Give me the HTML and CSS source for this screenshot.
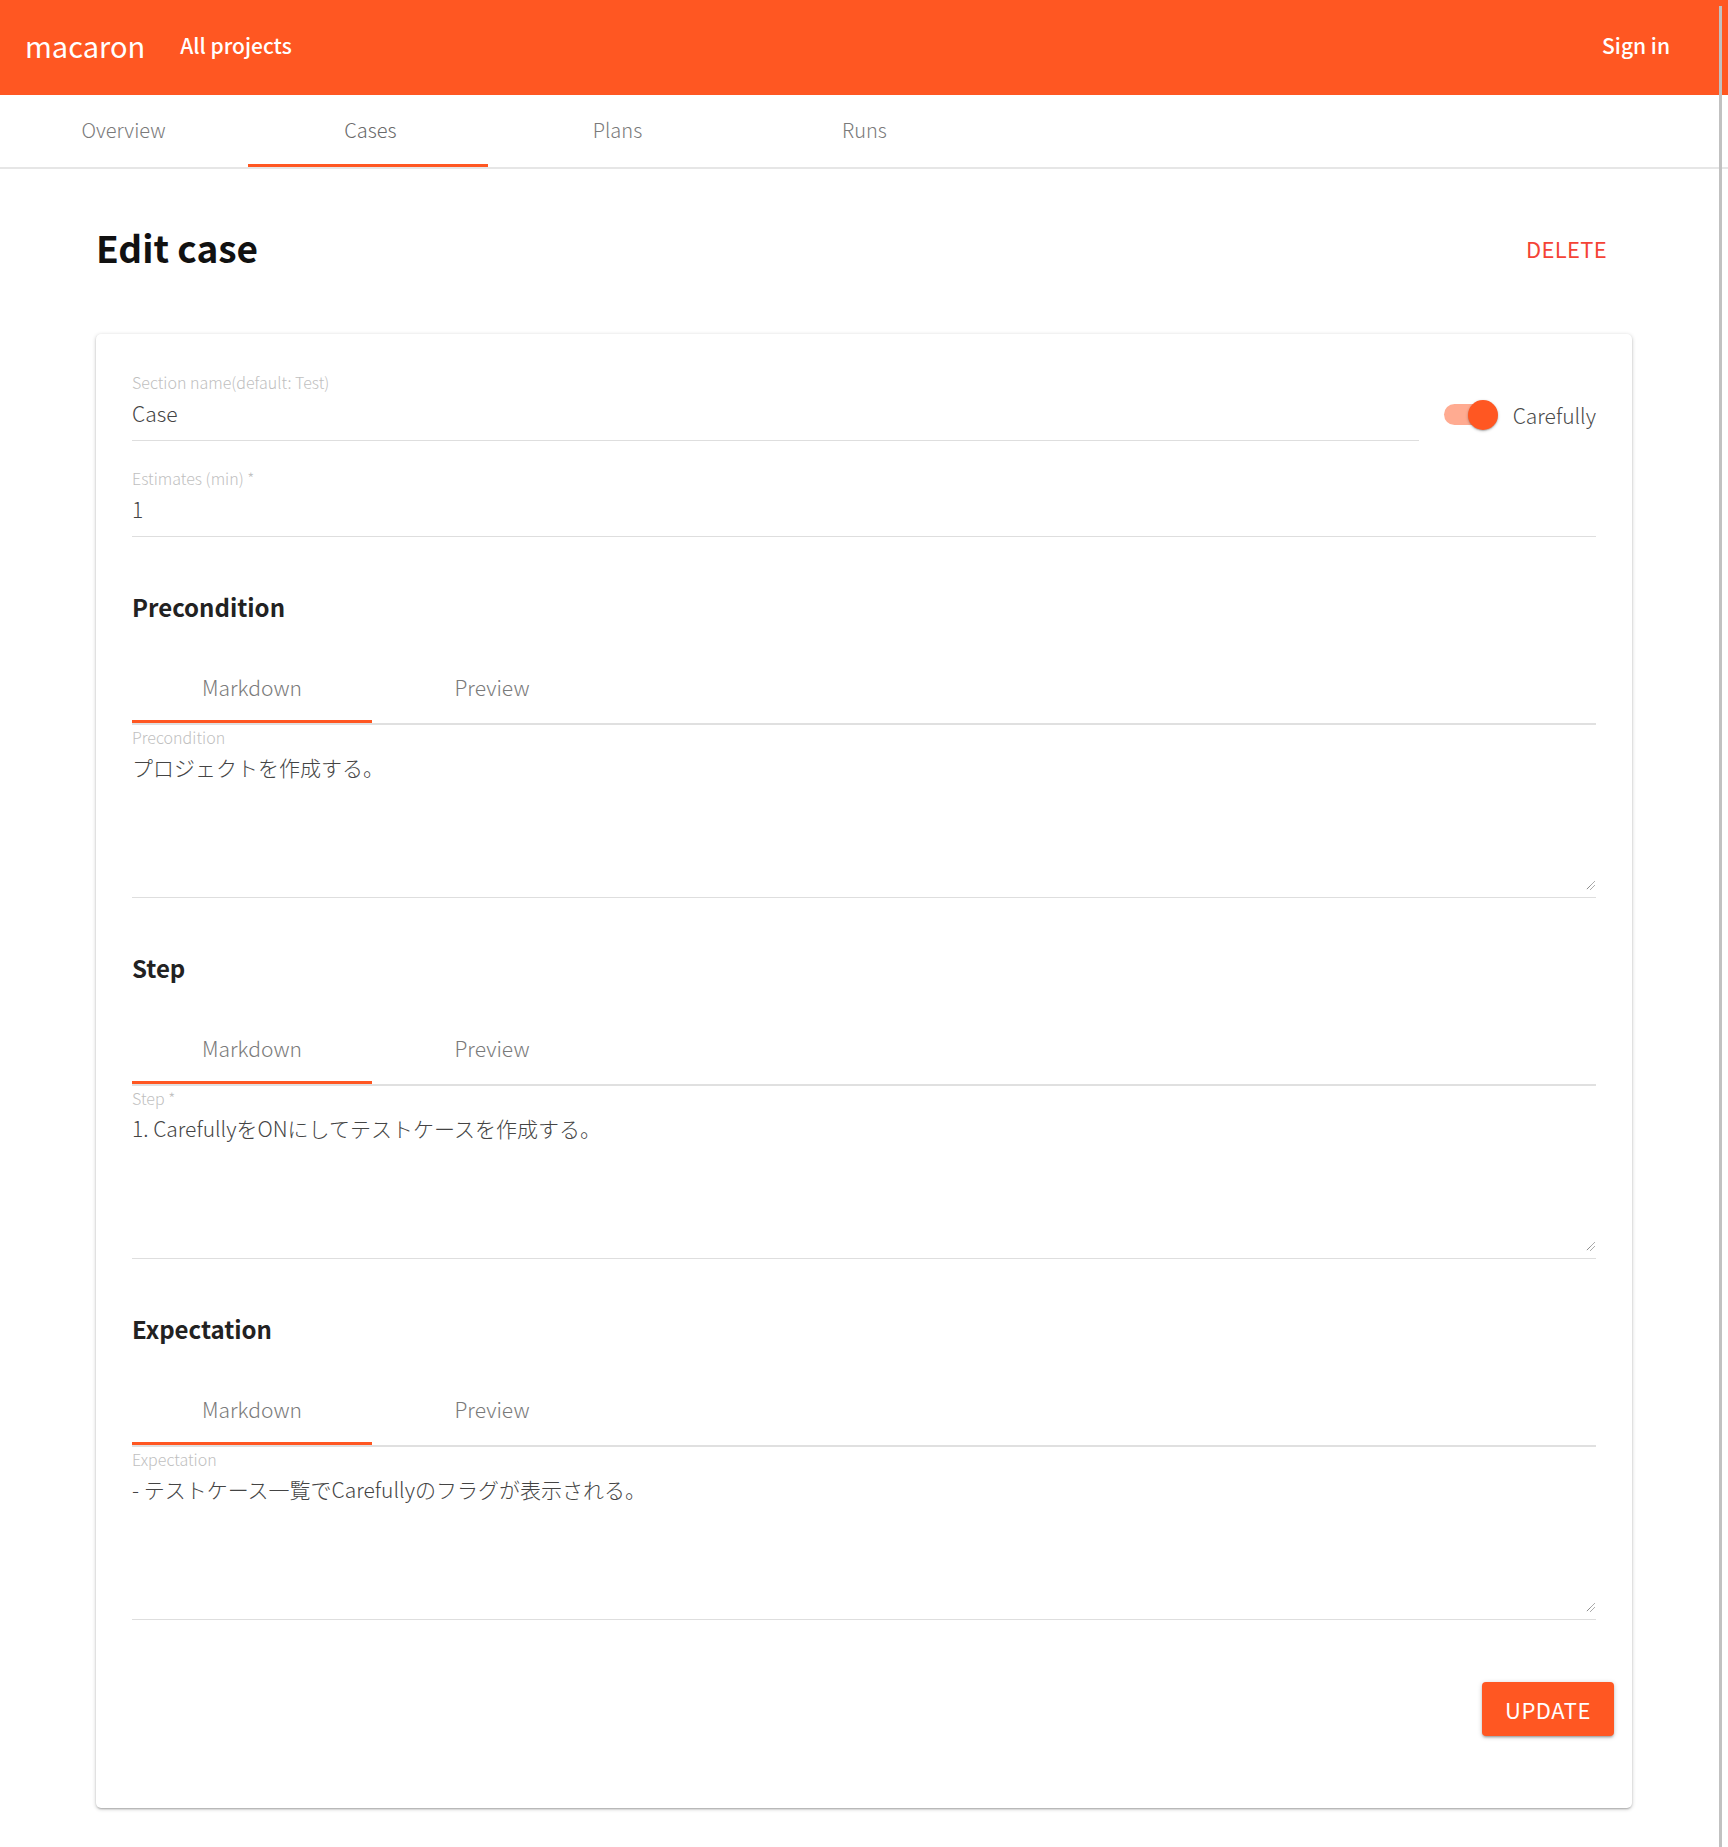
FILE: index.html
```html
<!DOCTYPE html>
<html lang="ja">
<head>
<meta charset="utf-8">
<title>macaron - Edit case</title>
<link rel="stylesheet" href="styles.css">
</head>
<body>
<header class="appbar">
  <span class="brand">macaron</span>
  <a class="nav-link">All projects</a>
  <span class="spacer"></span>
  <a class="nav-link signin">Sign in</a>
</header>
<nav class="tabs">
  <div class="tab">Overview</div>
  <div class="tab active">Cases</div>
  <div class="tab">Plans</div>
  <div class="tab">Runs</div>
</nav>
<main class="container">
  <div class="title-row">
    <h1 class="page-title">Edit case</h1>
    <button class="delete">DELETE</button>
  </div>
  <section class="card">
    <div class="top-row">
      <div class="field grow">
        <div class="label">Section name(default: Test)</div>
        <div class="value">Case</div>
      </div>
      <div class="switch-control">
        <span class="switch"><span class="track"></span><span class="thumb"></span></span>
        <span class="switch-label">Carefully</span>
      </div>
    </div>
    <div class="field spaced">
      <div class="label">Estimates (min) *</div>
      <div class="value">1</div>
    </div>

    <div class="md-section">
      <h2 class="section-title">Precondition</h2>
      <div class="md-tabs">
        <div class="md-tab active">Markdown</div>
        <div class="md-tab">Preview</div>
      </div>
      <div class="md-field">
        <div class="label">Precondition</div>
        <div class="md-body">プロジェクトを作成する。<svg class="grip" width="9" height="9" viewBox="0 0 9 9"><path d="M8.5 0.5 L0.5 8.5 M8.5 4.5 L4.5 8.5" stroke="#5a5a5a" stroke-width="1" stroke-dasharray="1 0.6" fill="none"/></svg></div>
      </div>
    </div>

    <div class="md-section">
      <h2 class="section-title">Step</h2>
      <div class="md-tabs">
        <div class="md-tab active">Markdown</div>
        <div class="md-tab">Preview</div>
      </div>
      <div class="md-field">
        <div class="label">Step *</div>
        <div class="md-body">1. CarefullyをONにしてテストケースを作成する。<svg class="grip" width="9" height="9" viewBox="0 0 9 9"><path d="M8.5 0.5 L0.5 8.5 M8.5 4.5 L4.5 8.5" stroke="#5a5a5a" stroke-width="1" stroke-dasharray="1 0.6" fill="none"/></svg></div>
      </div>
    </div>

    <div class="md-section">
      <h2 class="section-title">Expectation</h2>
      <div class="md-tabs">
        <div class="md-tab active">Markdown</div>
        <div class="md-tab">Preview</div>
      </div>
      <div class="md-field">
        <div class="label">Expectation</div>
        <div class="md-body">- テストケース一覧でCarefullyのフラグが表示される。<svg class="grip" width="9" height="9" viewBox="0 0 9 9"><path d="M8.5 0.5 L0.5 8.5 M8.5 4.5 L4.5 8.5" stroke="#5a5a5a" stroke-width="1" stroke-dasharray="1 0.6" fill="none"/></svg></div>
      </div>
    </div>

    <div class="actions">
      <button class="update">UPDATE</button>
    </div>
  </section>
</main>
<div class="scroll-line"></div>
</body>
</html>
```
FILE: styles.css
```css
* { box-sizing: border-box; }
html, body { margin: 0; padding: 0; }
body {
  font-family: "Noto Sans CJK JP", "Noto Sans", sans-serif;
  background: #fff;
  color: #212121;
  width: 1728px;
  height: 1847px;
  overflow: hidden;
  position: relative;
}

/* App bar */
.appbar {
  height: 95px;
  background: #ff5722;
  color: #fff;
  display: flex;
  align-items: center;
  padding: 0 58px 5px 25px;
}
.brand { font-size: 29px; line-height: 1; margin-right: 35px; }
.nav-link { font-size: 21px; font-weight: 500; line-height: 1; cursor: pointer; }
.spacer { flex: 1; }

/* Main tabs */
.tabs {
  display: flex;
  height: 74px;
  border-bottom: 2px solid #e6e6e6;
}
.tab {
  width: 247px;
  height: 72px;
  display: flex;
  align-items: center;
  justify-content: center;
  padding-bottom: 4px;
  font-size: 20px;
  font-weight: 300;
  color: #7a7a7a;
  position: relative;
}
.tab.active { color: #6a6a6a; }
.tab.active::after {
  content: "";
  position: absolute;
  left: 1px;
  width: 240px;
  bottom: 0;
  height: 3px;
  background: #ff5722;
}

/* Container */
.container {
  width: 1536px;
  margin: 0 auto;
}
.title-row {
  display: flex;
  align-items: center;
  justify-content: space-between;
  margin-top: 54px;
  height: 48px;
}
.page-title {
  margin: 0;
  font-size: 37px;
  line-height: 48px;
  font-weight: 700;
  color: #111;
}
.delete {
  background: none;
  border: 0;
  padding: 2px 25px 0 0;
  font-family: inherit;
  font-size: 22px;
  color: #f44336;
  letter-spacing: 0.3px;
}

/* Card */
.card {
  margin-top: 63px;
  padding: 38px 36px 72px;
  background: #fff;
  border-radius: 5px;
  box-shadow: 0 1px 4px rgba(0,0,0,0.2), 0 1px 2px rgba(0,0,0,0.14), 0 3px 2px -2px rgba(0,0,0,0.12);
}
.top-row { display: flex; align-items: flex-start; }
.grow { flex: 1; }
.field {
  border-bottom: 1px solid #dedede;
  padding-bottom: 12px;
}
.field.spaced { margin-top: 27px; }
.label {
  font-size: 16px;
  line-height: 20px;
  color: #c0c0c0;
  font-weight: 300;
}
.value {
  margin-top: 6px;
  font-size: 21px;
  line-height: 30px;
  color: #444;
  font-weight: 300;
}

/* Switch */
.switch-control {
  display: flex;
  align-items: center;
  margin-left: 25px;
  margin-top: 28px;
}
.switch {
  position: relative;
  width: 54px;
  height: 30px;
}
.track {
  position: absolute;
  left: 0;
  top: 4px;
  width: 51px;
  height: 21px;
  border-radius: 11px;
  background: #ffab91;
}
.thumb {
  position: absolute;
  right: 0;
  top: 0;
  width: 30px;
  height: 30px;
  border-radius: 50%;
  background: #ff5722;
  box-shadow: 0 1px 3px rgba(0,0,0,0.25), 0 1px 1px rgba(0,0,0,0.14);
}
.switch-label {
  margin-left: 15px;
  font-size: 21px;
  line-height: 30px;
  color: #4a4a4a;
  font-weight: 300;
}

/* Markdown sections */
.md-section { margin-top: 52px; }
.section-title {
  margin: 0;
  font-size: 24px;
  line-height: 36px;
  font-weight: 700;
  color: #222;
}
.md-tabs {
  display: flex;
  margin-top: 26px;
  border-bottom: 2px solid #e0e0e0;
}
.md-tab {
  width: 240px;
  height: 72px;
  display: flex;
  align-items: center;
  justify-content: center;
  font-size: 21px;
  font-weight: 300;
  color: #7a7a7a;
  position: relative;
}
.md-tab.active::after {
  content: "";
  position: absolute;
  left: 0;
  right: 0;
  bottom: 0;
  height: 3px;
  background: #ff5722;
}
.md-field {
  margin-top: 2px;
  border-bottom: 1px solid #dedede;
  padding-bottom: 7px;
}
.md-body {
  position: relative;
  margin-top: 5px;
  height: 138px;
  font-size: 21px;
  line-height: 30px;
  color: #444;
  font-weight: 300;
}
.grip {
  position: absolute;
  right: 1px;
  bottom: 0;
}

/* Actions */
.actions {
  display: flex;
  justify-content: flex-end;
  margin-top: 62px;
  margin-right: -18px;
}
.update {
  width: 132px;
  height: 54px;
  border: 0;
  border-radius: 4px;
  background: #ff5722;
  color: #fff;
  font-family: inherit;
  font-size: 22px;
  letter-spacing: 0.5px;
  box-shadow: 0 1px 5px rgba(0,0,0,0.2), 0 2px 2px rgba(0,0,0,0.14), 0 3px 1px -2px rgba(0,0,0,0.12);
}

.scroll-line {
  position: absolute;
  top: 6px;
  bottom: 0;
  right: 6px;
  width: 3px;
  background: #c1c1c1;
}
```
